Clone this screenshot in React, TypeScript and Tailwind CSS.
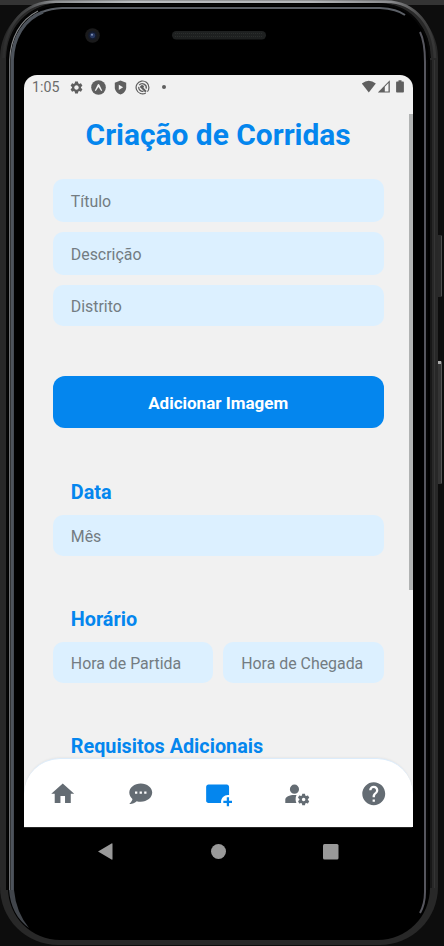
import React from "react";
import { MdSettings } from "react-icons/md";

const navIcons = [
  {
    name: "home",
    color: "text-[#646c73]",
    d: "M10,20V14H14V20H19V12H22L12,3L2,12H5V20H10Z",
  },
  {
    name: "chat",
    color: "text-[#646c73]",
    d: "M12,3C17.5,3 22,6.58 22,11C22,15.42 17.5,19 12,19C10.76,19 9.57,18.82 8.47,18.5C5.55,21 2,21 2,21C4.33,18.67 4.7,17.1 4.75,16.5C3.05,15.07 2,13.13 2,11C2,6.58 6.5,3 12,3M17,12V10H15V12H17M13,12V10H11V12H13M9,12V10H7V12H9Z",
  },
  {
    name: "create",
    color: "text-[#0486ee]",
    d: "M21 18H24V20H21V23H19V20H16V18H19V15H21V18M14 19C14 19.34 14.03 19.67 14.09 20H3C1.9 20 1 19.1 1 18V6C1 4.9 1.9 4 3 4H19C20.1 4 21 4.9 21 6V13.09C20.67 13.03 20.34 13 20 13C16.69 13 14 15.69 14 19Z",
  },
  {
    name: "account",
    color: "text-[#646c73]",
    d: "M10 4A4 4 0 0 0 6 8A4 4 0 0 0 10 12A4 4 0 0 0 14 8A4 4 0 0 0 10 4M17 12C16.84 12 16.76 12.08 16.76 12.24L16.5 13.5C16.28 13.68 15.96 13.84 15.72 14L14.44 13.5C14.36 13.5 14.2 13.5 14.12 13.6L13.16 15.36C13.08 15.44 13.08 15.6 13.24 15.68L14.28 16.5V17.5L13.24 18.32C13.16 18.4 13.08 18.56 13.16 18.64L14.12 20.4C14.2 20.5 14.36 20.5 14.44 20.5L15.72 20C15.96 20.16 16.28 20.32 16.5 20.5L16.76 21.76C16.76 21.92 16.84 22 17 22H19C19.08 22 19.24 21.92 19.24 21.76L19.4 20.5C19.72 20.32 20.04 20.16 20.28 20L21.5 20.5C21.64 20.5 21.8 20.5 21.8 20.4L22.84 18.64C22.92 18.56 22.84 18.4 22.76 18.32L21.72 17.5V16.5L22.76 15.68C22.84 15.6 22.92 15.44 22.84 15.36L21.8 13.6C21.8 13.5 21.64 13.5 21.5 13.5L20.28 14C20.04 13.84 19.72 13.68 19.4 13.5L19.24 12.24C19.24 12.08 19.08 12 19 12H17M10 13C5.58 13 2 14.79 2 17V20H11.67A7 7 0 0 1 11 17A7 7 0 0 1 11.79 13.13C11.22 13.05 10.62 13 10 13M18.04 15.5C18.84 15.5 19.5 16.16 19.5 17.04C19.5 17.84 18.84 18.5 18.04 18.5C17.16 18.5 16.5 17.84 16.5 17.04C16.5 16.16 17.16 15.5 18.04 15.5Z",
  },
  {
    name: "help",
    color: "text-[#646c73]",
    d: "M15.07,11.25L14.17,12.17C13.45,12.89 13,13.5 13,15H11V14.5C11,13.39 11.45,12.39 12.17,11.67L13.41,10.41C13.78,10.05 14,9.55 14,9C14,7.89 13.1,7 12,7A2,2 0 0,0 10,9H8A4,4 0 0,1 12,5A4,4 0 0,1 16,9C16,9.88 15.64,10.67 15.07,11.25M13,19H11V17H13M12,2A10,10 0 0,0 2,12A10,10 0 0,0 12,22A10,10 0 0,0 22,12C22,6.47 17.5,2 12,2Z",
  },
];

function StatusBar() {
  return (
    <div className="flex h-6 shrink-0 items-center pr-2 pl-2 text-[#5f5f5f]">
      <span className="w-[28px] text-[14.2px] leading-6 whitespace-nowrap text-[#6b6b6b]">1:05</span>
      <MdSettings className="ml-[9px] size-[15px]" />
      <svg className="ml-[7px] size-[15px]" viewBox="0 0 15 15">
        <circle cx="7.5" cy="7.5" r="7.3" fill="currentColor" />
        <path d="M3.8 10.6 6.6 4.8q.9-1.4 1.8 0l2.8 5.8-1 .5-2.7-4.2-2.7 4.2Z" fill="#f1f1f1" />
      </svg>
      <svg className="ml-[7px] size-[15px]" viewBox="0 0 15 15">
        <path d="M7.5.6 13.2 2.8v4.6c0 3.2-2.4 6-5.7 7C4.2 13.400 1.800 10.600 1.800 7.400V2.800Z" fill="currentColor" />
        <path d="M5.8 4.700v5.200l4.300-2.600Z" fill="#f1f1f1" />
      </svg>
      <svg className="ml-[7px] size-[15px]" viewBox="0 0 15 15" fill="none" stroke="currentColor">
        <path d="M10.800 12.900A6.400 6.400 0 1 1 13.900 7.500c0 1.800-.5 3.100-1.500 4.200" strokeWidth="1.200" />
        <path d="M4.200 5.200a4 4 0 0 1 7 3.400M3.700 6.900a4 4 0 0 0 4.800 4.400" strokeWidth="1.300" />
        <path d="M5.500 6.200 11 11.800" strokeWidth="2" />
        <circle cx="7.200" cy="6.600" r="1.700" fill="currentColor" stroke="none" />
      </svg>
      <span className="ml-[12px] size-1 rounded-full bg-[#5f5f5f]" />
      <svg className="mb-px ml-auto h-[13px] w-[44px]" viewBox="0 0 44 13">
        <path d="M.8 3.400Q7.800-1.700 14.800 3.400L7.800 12.400Z" fill="currentColor" />
        <path d="M16.800 12.500 28.800.300V12.500Z" fill="currentColor" />
        <path d="M23.800 6.800 27.500 3v8.400h-3.700Z" fill="#f4f4f4" />
        <path d="M37.500.300h3v1.300h1.600q.8 0 .8.800v9.300q0 .8-.8.800h-6.200q-.8 0-.8-.8V2.400q0-.8.800-.8h1.600Z" fill="currentColor" />
      </svg>
    </div>
  );
}

function Field({ label, className }: { label: string; className: string }) {
  return (
    <div className={`flex items-center rounded-[10px] bg-[#dcf0ff] pl-[18px] text-[15.900px] text-[#737c82] ${className}`}>
      <span className="pt-[3px] whitespace-nowrap">{label}</span>
    </div>
  );
}

function SectionTitle({ children }: { children: React.ReactNode }) {
  return <h2 className="pt-px pl-[18px] text-[19.800px] leading-6 font-bold whitespace-nowrap text-[#0486ee]">{children}</h2>;
}

function BottomNav() {
  return (
    <nav className="absolute inset-x-0 bottom-0 flex h-[69.500px] rounded-t-[36px] border-t-[1.500px] border-[#dcecfb] bg-white pt-[2px] shadow-[0_-1px_2px_rgba(0,0,0,0.04)]">
      {navIcons.map((icon) => (
        <div key={icon.name} className="flex flex-1 items-center justify-center">
          <svg viewBox="0 0 24 24" className={`size-[27.500px] ${icon.color}`} fill="currentColor">
            <path d={icon.d} />
          </svg>
        </div>
      ))}
    </nav>
  );
}

/* Rim reflections, side buttons, camera and speaker of the handset body. */
function BodyShine() {
  return (
    <svg className="pointer-events-none absolute inset-0" width="444" height="946" viewBox="0 0 444 946" fill="none">
      <defs>
        <linearGradient id="rim" x1="0" y1="0" x2="444" y2="0" gradientUnits="userSpaceOnUse">
          <stop offset="0" stopColor="#2a2a2a" />
          <stop offset="0.060" stopColor="#444546" />
          <stop offset="0.120" stopColor="#8c8e91" />
          <stop offset="0.300" stopColor="#b9bcbf" />
          <stop offset="0.700" stopColor="#b4b6b9" />
          <stop offset="0.880" stopColor="#8a8b8e" />
          <stop offset="0.950" stopColor="#444" />
          <stop offset="1" stopColor="#2a2a2a" />
        </linearGradient>
      </defs>
      <path d="M3.500 58C5 24 24 1.600 56 1.600H386C416 2 434 26 435 58" stroke="url(#rim)" strokeWidth="2.600" />
      <path d="M7 890V58C8 28 28 5.500 58 5H384C412 6 429 30 430 58" stroke="#060606" strokeWidth="2" />
      <path d="M12 890V60C13 30 32 9 62 8H380Q397 9 405 15" stroke="#5c6067" strokeWidth="2" />
      <path d="M12.300 890V60C13 38 24 19 43 12" stroke="#4d535b" strokeWidth="3.200" />
      <path d="M9.700 890V60C10.500 38 20 20 38 11" stroke="#858789" strokeWidth="1.100" />
      <path d="M9 890Q11 915 29 928Q16 912 14 890Z" fill="#41454b" />
      <path d="M420 32Q425 42 425 62V892Q425 904 420 913" stroke="#56565e" strokeWidth="2" />
      <path d="M427 60V890" stroke="#050505" strokeWidth="2" />
      <path d="M431 60V888" stroke="#080808" strokeWidth="1" />
      <path d="M434.500 60V888" stroke="#353535" strokeWidth="1" />
      <rect x="438" y="235" width="4" height="62" fill="#292929" />
      <path d="M441.500 236V296" stroke="#4c4c4c" />
      <rect x="438" y="361" width="4" height="123" fill="#343434" />
      <path d="M441.500 362V483" stroke="#555" />
      <rect x="438" y="361" width="3" height="3" fill="#aaa" />
      <circle cx="92.500" cy="35.500" r="7.300" fill="#1a1a1b" />
      <circle cx="92.500" cy="35.500" r="4.500" fill="#141a2a" />
      <circle cx="92.500" cy="35.500" r="2.700" fill="#26365f" />
      <circle cx="92" cy="34.800" r="1" fill="#8797b8" />
      <rect x="172" y="31" width="94" height="8.500" rx="4.200" fill="#1e2020" />
      <path d="M175 33.500H263M175 36.500H263" stroke="#2b2e2d" strokeWidth="1" strokeDasharray="1 1" />
    </svg>
  );
}

export default function App() {
  return (
    <div className="relative h-[946px] w-[444px] overflow-hidden bg-[linear-gradient(#343434_0px,#343434_5px,#0d0d0d_5px)] pr-[6px] font-[Roboto,sans-serif]">
      <div className="h-[945px] rounded-[58px] bg-[#282828] px-2 pt-[3px] pb-[5px]">
        <div className="flex h-full flex-col rounded-[52px] bg-black pt-[72px] pr-[17px] pl-4">
          <main className="relative flex h-[752px] w-[389px] shrink-0 flex-col overflow-hidden rounded-t-[13px] bg-[#f1f1f1]">
            <StatusBar />
            <div className="flex flex-1 flex-col pt-[18px] pr-[29.500px] pl-[28.800px]">
              <h1 className="text-center text-[29.900px] leading-9 font-bold whitespace-nowrap text-[#0486ee]">Criação de Corridas</h1>
              <div className="mt-[26.300px] flex flex-col gap-[10px]">
                <Field label="Título" className="h-[43px]" />
                <Field label="Descrição" className="h-[43px]" />
                <Field label="Distrito" className="h-[41px]" />
              </div>
              <button className="mt-[49.700px] h-[52.300px] rounded-[12px] bg-[#0486ee] pt-[2.500px] text-[17px] font-bold text-white">Adicionar Imagem</button>
              <div className="mt-[51.400px] flex flex-col gap-[10px]">
                <SectionTitle>Data</SectionTitle>
                <Field label="Mês" className="h-[41px]" />
              </div>
              <div className="mt-[51px] flex flex-col gap-[10px]">
                <SectionTitle>Horário</SectionTitle>
                <div className="flex gap-[10px]">
                  <Field label="Hora de Partida" className="h-[41px] flex-1" />
                  <Field label="Hora de Chegada" className="h-[41px] flex-1" />
                </div>
              </div>
              <div className="mt-[51px]">
                <SectionTitle>Requisitos Adicionais</SectionTitle>
              </div>
            </div>
            <div className="absolute top-[39px] right-0 h-[476px] w-1 bg-[#b1b3b3]" />
            <BottomNav />
          </main>
          <div className="flex h-[48px] w-[388px] items-center justify-center border-t border-[#262626] text-[#999]">
            <svg className="h-[17px] w-[241px]" viewBox="0 0 241 17" fill="currentColor">
              <path d="M0 8.500 13.500.500Q14.500 0 14.500 1V16q0 1-1 .5Z" />
              <circle cx="120.500" cy="8.500" r="7.500" />
              <rect x="225" y="1" width="15.500" height="15.500" rx="1.500" />
            </svg>
          </div>
        </div>
      </div>
      <BodyShine />
    </div>
  );
}
